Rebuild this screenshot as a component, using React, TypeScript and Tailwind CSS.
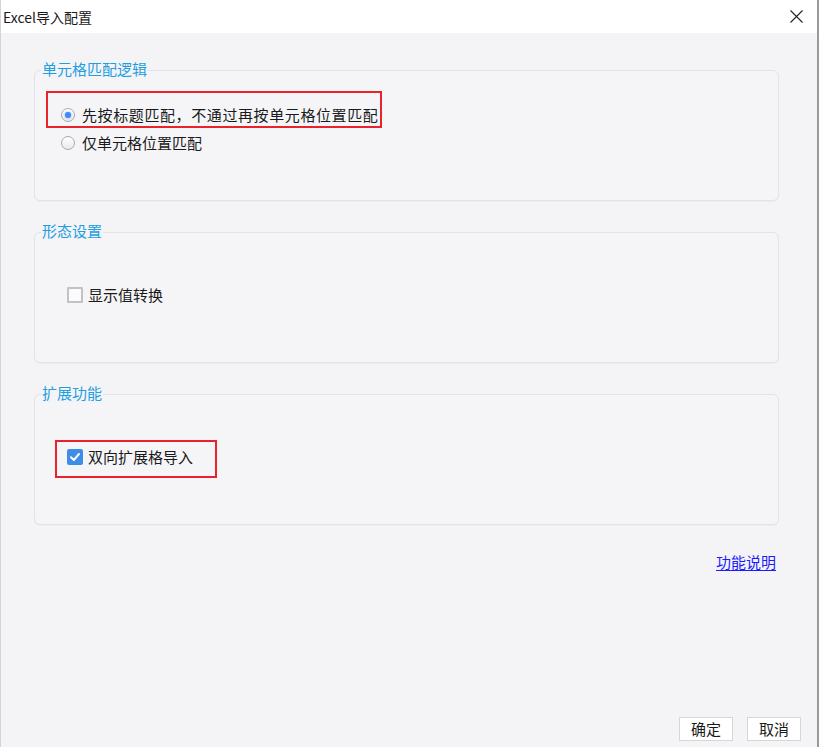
import React, { useState } from "react";

const FONT = { fontFamily: '"Noto Sans CJK SC", "Noto Sans", sans-serif' };

function Radio({ checked }: { checked: boolean }) {
  return (
    <span className="flex h-[14px] w-[14px] shrink-0 items-center justify-center rounded-full border border-[#a9a9ad] bg-gradient-to-b from-[#ffffff] to-[#e9e9ec]">
      {checked && <span className="h-[6px] w-[6px] rounded-full bg-[#3d8ef2] shadow-[0_0_2px_#5aa2f5]" />}
    </span>
  );
}

function Checkbox({ checked }: { checked: boolean }) {
  if (checked) {
    return (
      <span className="flex h-[16px] w-[16px] shrink-0 items-center justify-center rounded-[2px] bg-[#3e8de6]">
        <svg width="12" height="12" viewBox="0 0 12 12" fill="none">
          <path d="M2 6.3 L4.8 9 L10 3" stroke="#ffffff" strokeWidth="2" strokeLinecap="round" strokeLinejoin="round" />
        </svg>
      </span>
    );
  }
  return <span className="h-[16px] w-[16px] shrink-0 rounded-[1px] border-2 border-[#c2c2c6] bg-[#fbfbfc]" />;
}

function Group({ title, mt, children }: { title: string; mt: string; children: React.ReactNode }) {
  return (
    <div className={`relative h-[131px] rounded-[6px] border border-[#e3e3e7] bg-[#f5f5f8] shadow-[0_1px_1px_rgba(0,0,0,0.03)] ${mt}`}>
      <span className="absolute left-[6px] top-[-12px] bg-[#f4f4f7] px-[1px] text-[15px] leading-[20px] text-[#1f9ee0]">
        {title}
      </span>
      {children}
    </div>
  );
}

export default function App() {
  const [radio, setRadio] = useState(0);
  const [showConvert, setShowConvert] = useState(false);
  const [twoWay, setTwoWay] = useState(true);

  return (
    <div
      className="flex h-[747px] w-[819px] flex-col border-l border-r-2 border-l-[#d4d4d8] border-r-[#9a9a9e] bg-[#f4f4f7] text-[#1a1a1a]"
      style={FONT}
    >
      {/* title bar */}
      <div className="flex h-[33px] shrink-0 items-center justify-between bg-white pl-[2px] pr-[14px]">
        <span className="text-[14px] leading-[20px]">Excel导入配置</span>
        <svg width="13" height="13" viewBox="0 0 13 13">
          <path d="M0.5 0.5 L12.5 12.5 M12.5 0.5 L0.5 12.5" stroke="#222" strokeWidth="1.1" />
        </svg>
      </div>

      <div className="flex-1 pl-[33px] pr-[38px]">
        <Group title="单元格匹配逻辑" mt="mt-[37px]">
          <div className="pl-[11px] pt-[20px]">
            <div className="h-[37px] w-[336px] border-2 border-[#e8232b] pl-[13px] pt-[12px]">
              <label className="flex h-[20px] items-center gap-[7px] whitespace-nowrap text-[15px] leading-[20px]" onClick={() => setRadio(0)}>
                <Radio checked={radio === 0} />
                <span className="tracking-[0.6px]">先按标题匹配，不通过再按单元格位置匹配</span>
              </label>
            </div>
            <label className="ml-[15px] mt-[5px] flex h-[20px] items-center gap-[7px] text-[15px] leading-[20px]" onClick={() => setRadio(1)}>
              <Radio checked={radio === 1} />
              <span>仅单元格位置匹配</span>
            </label>
          </div>
        </Group>

        <Group title="形态设置" mt="mt-[31px]">
          <div className="pl-[32px] pt-[52px]">
            <label className="flex h-[20px] items-center gap-[5px] text-[15px] leading-[20px]" onClick={() => setShowConvert(!showConvert)}>
              <Checkbox checked={showConvert} />
              <span>显示值转换</span>
            </label>
          </div>
        </Group>

        <Group title="扩展功能" mt="mt-[31px]">
          <div className="pl-[20px] pt-[45px]">
            <div className="h-[38px] w-[162px] border-2 border-[#e8232b] pl-[10px] pt-[5px]">
              <label className="flex h-[20px] items-center gap-[5px] whitespace-nowrap text-[15px] leading-[20px]" onClick={() => setTwoWay(!twoWay)}>
                <Checkbox checked={twoWay} />
                <span>双向扩展格导入</span>
              </label>
            </div>
          </div>
        </Group>

        <div className="mt-[27px] flex justify-end pr-[3px]">
          <a href="#" className="text-[15px] leading-[20px] text-[#1b1bff] underline underline-offset-2">
            功能说明
          </a>
        </div>
      </div>

      <div className="flex justify-end gap-[14px] pb-[6px] pr-[16px]">
        <button className="h-[24px] w-[54px] border border-[#d6d6da] bg-white text-[15px] leading-[20px]">确定</button>
        <button className="h-[24px] w-[54px] border border-[#d6d6da] bg-white text-[15px] leading-[20px]">取消</button>
      </div>
    </div>
  );
}
